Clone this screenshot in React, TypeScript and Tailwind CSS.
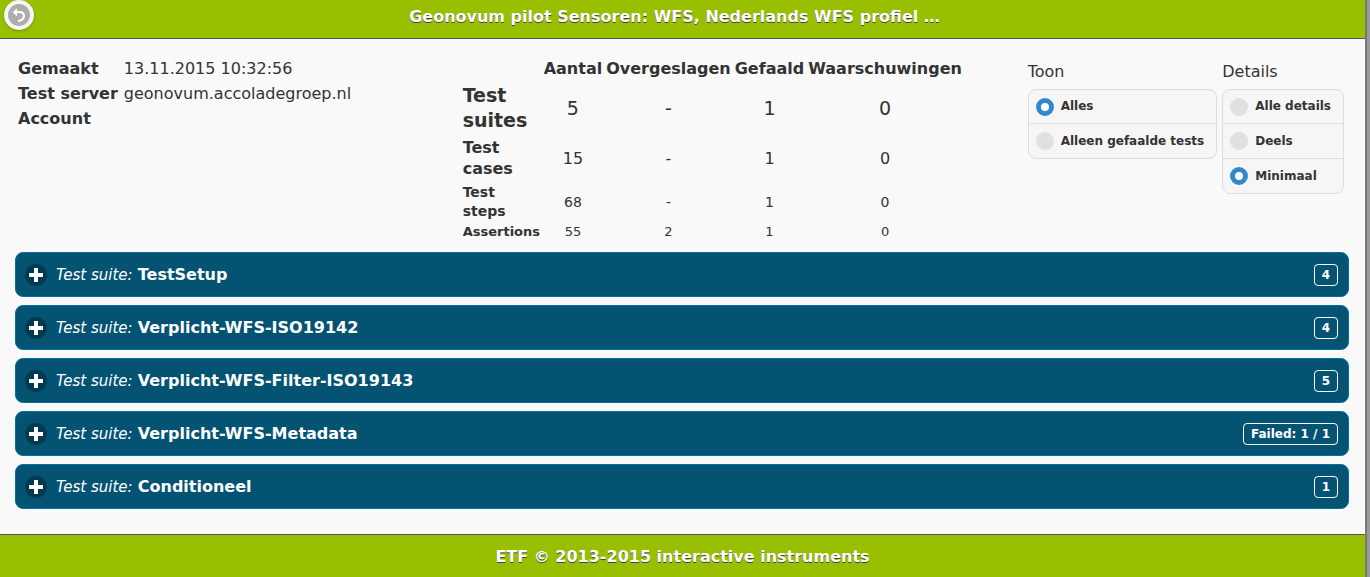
import { useState } from "react";

type Option = { value: string; label: string };

const stats = [
  { label: "Test suites", cls: "text-[19px] leading-[25px]", values: ["5", "-", "1", "0"] },
  { label: "Test cases", cls: "text-[16px] leading-[21px]", values: ["15", "-", "1", "0"] },
  { label: "Test steps", cls: "text-[14px] leading-[19px]", values: ["68", "-", "1", "0"] },
  { label: "Assertions", cls: "text-[13px] leading-[14px]", values: ["55", "2", "1", "0"] },
];

const suites = [
  { name: "TestSetup", count: "4" },
  { name: "Verplicht-WFS-ISO19142", count: "4" },
  { name: "Verplicht-WFS-Filter-ISO19143", count: "5" },
  { name: "Verplicht-WFS-Metadata", count: "Failed: 1 / 1" },
  { name: "Conditioneel", count: "1" },
];

function RadioGroup({ legend, name, options, initial }: { legend: string; name: string; options: Option[]; initial: string }) {
  const [value, setValue] = useState(initial);
  return (
    <fieldset>
      <legend className="mb-[7px] leading-[21px]">{legend}</legend>
      <div className="divide-y divide-[#ddd] overflow-hidden rounded-lg border border-[#ddd] bg-[#f6f6f6]">
        {options.map((o) => (
          <label key={o.value} className="flex h-[35px] cursor-pointer items-center gap-[7px] pr-3 pl-[7px] text-[12px] font-bold whitespace-nowrap first:h-[34px] last:h-[34px]">
            <input
              type="radio"
              name={name}
              value={o.value}
              checked={value === o.value}
              onChange={() => setValue(o.value)}
              className="size-[18px] shrink-0 appearance-none rounded-full bg-[#e0e0e0] checked:border-[5px] checked:border-[#3388cc] checked:bg-white"
            />
            {o.label}
          </label>
        ))}
      </div>
    </fieldset>
  );
}

export default function App() {
  return (
    <div className="flex min-h-screen bg-[#f9f9f9] font-['DejaVu_Sans',sans-serif] text-[16px] leading-[21px] text-[#333]">
      <div className="flex min-w-0 grow flex-col">
        <header className="relative border-b border-[#555] bg-[#99c000] pt-1.5 pr-4 pb-[11px] text-center font-bold text-white [text-shadow:0_1px_0_#444]">
          <a
            href="#terug"
            aria-label="Terug"
            className="absolute top-0 left-1 flex size-[30px] items-center justify-center rounded-full bg-[#f6f6f6] shadow-[0_1px_3px_rgba(0,0,0,0.25)]"
          >
            <svg viewBox="0 0 22 22" className="size-[22px]" aria-hidden="true">
              <circle cx="11" cy="11" r="11" fill="#adadad" />
              <path d="M4.6 8.3 9 4.2v8.2z" fill="#fff" />
              <path d="M8 8.2h3.5c3 0 4.4 1.5 4.4 3.9 0 2.6-1.9 4.4-5.9 5" fill="none" stroke="#fff" strokeWidth="2.2" />
            </svg>
          </a>
          <h1>Geonovum pilot Sensoren: WFS, Nederlands WFS profiel …</h1>
        </header>

        <main className="grow pt-4 pr-4 pb-[25px] pl-[15px]">
          <div className="flex items-start">
            <div className="w-1/3 shrink-0">
              <table className="border-separate border-spacing-[2px] text-left">
                <tbody>
                  <tr>
                    <th className="py-px pr-[3px] pl-px">Gemaakt</th>
                    <td className="p-px">13.11.2015 10:32:56</td>
                  </tr>
                  <tr>
                    <th className="py-px pr-[3px] pl-px">Test server</th>
                    <td className="p-px">geonovum.accoladegroep.nl</td>
                  </tr>
                  <tr>
                    <th className="py-px pr-[3px] pl-px">Account</th>
                    <td className="p-px" />
                  </tr>
                </tbody>
              </table>
            </div>

            <table className="border-separate border-spacing-[2px] text-center">
              <thead>
                <tr>
                  <td className="p-px" />
                  {["Aantal", "Overgeslagen", "Gefaald", "Waarschuwingen"].map((h) => (
                    <th key={h} scope="col" className="p-px">{h}</th>
                  ))}
                </tr>
              </thead>
              <tbody>
                {stats.map((row) => (
                  <tr key={row.label} className={row.cls}>
                    <th scope="row" className="w-[79px] max-w-[79px] p-px text-left">{row.label}</th>
                    {row.values.map((v, i) => (
                      <td key={i} className="p-px">{v}</td>
                    ))}
                  </tr>
                ))}
              </tbody>
            </table>

            <div className="mr-[5px] ml-auto flex items-start gap-[5px] pt-1.5">
              <RadioGroup
                legend="Toon"
                name="toon"
                initial="alles"
                options={[
                  { value: "alles", label: "Alles" },
                  { value: "gefaald", label: "Alleen gefaalde tests" },
                ]}
              />
              <RadioGroup
                legend="Details"
                name="details"
                initial="minimaal"
                options={[
                  { value: "alle", label: "Alle details" },
                  { value: "deels", label: "Deels" },
                  { value: "minimaal", label: "Minimaal" },
                ]}
              />
            </div>
          </div>

          <div className="mt-2.5 flex flex-col gap-2">
            {suites.map((s) => (
              <button
                key={s.name}
                type="button"
                className="flex h-[45px] w-full items-center rounded-lg border border-[#0073a6] bg-[#045373] pr-2.5 pl-[9px] text-left text-white"
              >
                <svg viewBox="0 0 22 22" className="mr-[9px] size-[22px] shrink-0" aria-hidden="true">
                  <circle cx="11" cy="11" r="11" fill="#033a50" />
                  <path d="M9 4h4v5h5v4h-5v5H9v-5H4V9h5z" fill="#fff" />
                </svg>
                <span>
                  <i className="text-[15px]">Test suite:</i> <b>{s.name}</b>
                </span>
                <span className="ml-auto rounded border border-white px-[7px] text-[12px] leading-5 font-bold">{s.count}</span>
              </button>
            ))}
          </div>
        </main>

        <footer className="border-t border-[#555] bg-[#99c000] pt-[11px] pb-2.5 text-center font-bold text-white [text-shadow:0_1px_0_#444]">
          ETF © 2013-2015 interactive instruments
        </footer>
      </div>
      <div className="w-[5px] shrink-0 border-l-2 border-[#777] bg-[#999]" />
    </div>
  );
}
